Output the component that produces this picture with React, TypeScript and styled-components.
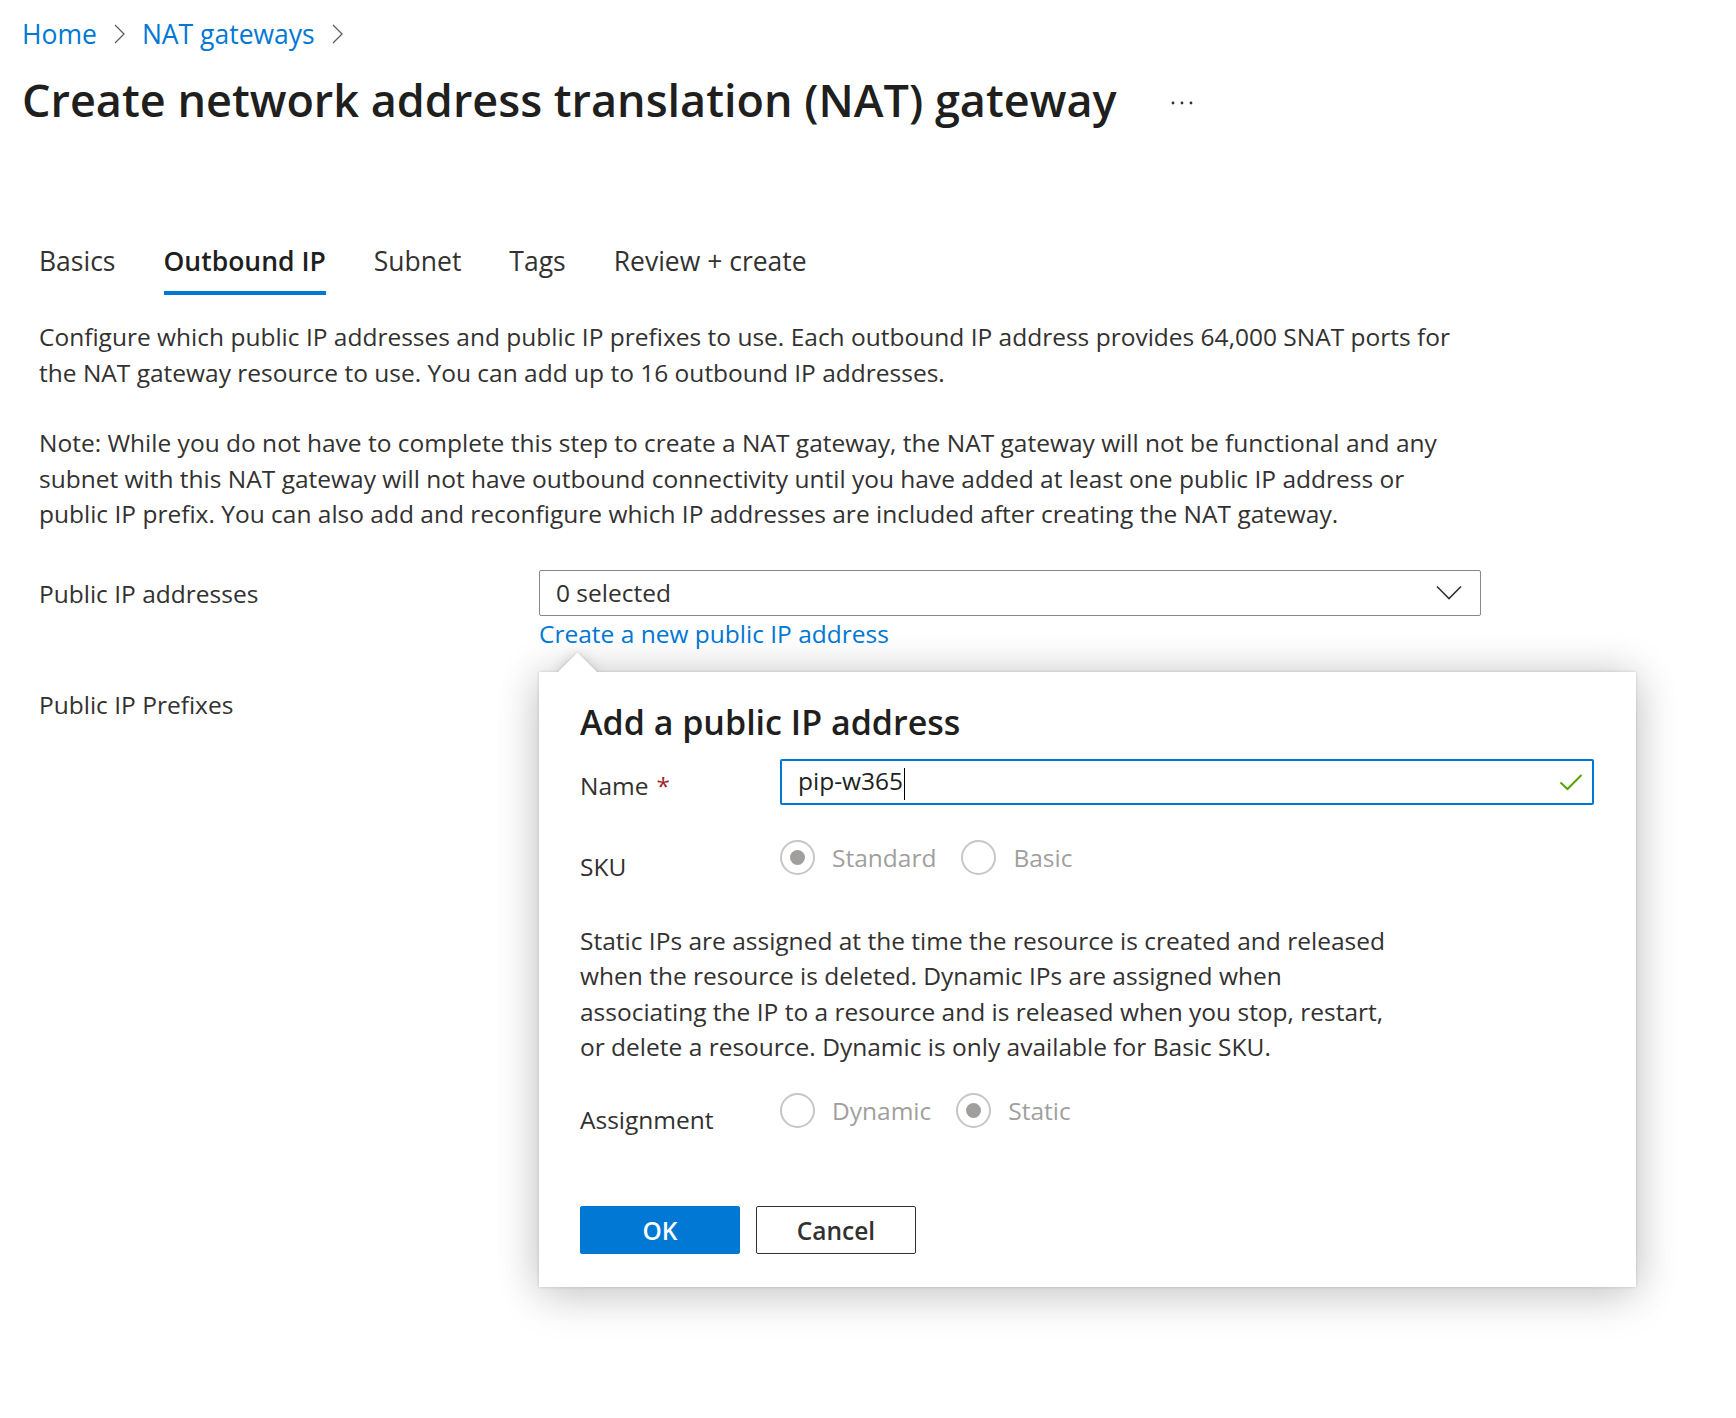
import styled, { createGlobalStyle } from 'styled-components'

const GlobalStyle = createGlobalStyle`
  html, body {
    margin: 0;
    padding: 0;
    background: #ffffff;
  }
  body {
    font-family: 'Open Sans', 'Noto Sans', sans-serif;
    color: #323130;
    -webkit-font-smoothing: antialiased;
  }
`

const Page = styled.div`
  width: 1736px;
  min-height: 1418px;
  box-sizing: border-box;
  padding-top: 16px;
`

const Header = styled.header`
  padding-left: 22px;
`

const Breadcrumb = styled.nav`
  display: flex;
  align-items: center;
  gap: 17px;
  font-size: 26.5px;
  line-height: 36px;
`

const Crumb = styled.a`
  color: #0078d4;
  text-decoration: none;
`

const TitleRow = styled.div`
  display: flex;
  align-items: center;
  gap: 54px;
  margin-top: 18px;
`

const Title = styled.h1`
  margin: 0;
  font-size: 45px;
  line-height: 60px;
  font-weight: 600;
  color: #201f1e;
`

const Dots = styled.svg`
  margin-top: 6px;
`

const Content = styled.main`
  padding-left: 39px;
`

const Tabs = styled.div`
  display: flex;
  gap: 48px;
  margin-top: 114px;
`

const Tab = styled.div<{ active?: boolean }>`
  font-size: 26.5px;
  line-height: 34px;
  padding-bottom: 13px;
  font-weight: ${({ active }) => (active ? 600 : 400)};
  color: ${({ active }) => (active ? '#201f1e' : '#323130')};
  border-bottom: 4px solid ${({ active }) => (active ? '#0078d4' : 'transparent')};
`

const Paragraph = styled.p<{ gap: number }>`
  margin: ${({ gap }) => gap}px 0 0;
  font-size: 24.5px;
  line-height: 35.5px;
  white-space: nowrap;
`

const Form = styled.div`
  display: grid;
  grid-template-columns: 500px 942px;
  row-gap: 35.5px;
  margin-top: 38px;
`

const Label = styled.div<{ offset?: number }>`
  font-size: 24.5px;
  line-height: 35.5px;
  padding-top: ${({ offset }) => offset ?? 0}px;
`

const Field = styled.div`
  position: relative;
`

const Select = styled.div`
  height: 46px;
  box-sizing: border-box;
  border: 1px solid #8a8886;
  border-radius: 2px;
  display: flex;
  align-items: center;
  justify-content: space-between;
  padding: 0 18px 0 16px;
  font-size: 24.5px;
`

const Link = styled.a`
  display: block;
  color: #0078d4;
  font-size: 24.5px;
  line-height: 35.5px;
  text-decoration: none;
`

const Callout = styled.div`
  position: absolute;
  left: 0;
  top: calc(100% + 20.5px);
  width: 1097px;
  z-index: 10;
  box-shadow: 0 0 40px rgba(0, 0, 0, 0.16), 0 12px 44px rgba(0, 0, 0, 0.12),
    0 0 3px rgba(0, 0, 0, 0.16);
`

const Beak = styled.div`
  position: absolute;
  left: 24.5px;
  top: -13.5px;
  width: 27px;
  height: 27px;
  background: #ffffff;
  transform: rotate(45deg);
  box-shadow: 0 0 14px rgba(0, 0, 0, 0.16), 0 0 3px rgba(0, 0, 0, 0.14);
`

const CalloutBody = styled.div`
  position: relative;
  z-index: 1;
  background: #ffffff;
  padding: 28px 42px 33px 41px;
`

const CalloutTitle = styled.h2`
  margin: 0;
  font-size: 34px;
  line-height: 44px;
  font-weight: 600;
  color: #201f1e;
`

const Row = styled.div<{ gap: number }>`
  display: grid;
  grid-template-columns: 200px 1fr;
  align-items: start;
  margin-top: ${({ gap }) => gap}px;
`

const Required = styled.span`
  color: #a4262c;
  margin-left: 8px;
`

const Input = styled.div`
  height: 46px;
  box-sizing: border-box;
  border: 2px solid #0078d4;
  border-radius: 2px;
  display: flex;
  align-items: center;
  justify-content: space-between;
  padding: 0 9px 0 16px;
  font-size: 24.5px;
  color: #201f1e;
`

const Caret = styled.span`
  display: inline-block;
  width: 1px;
  height: 32px;
  background: #000000;
  vertical-align: middle;
  margin-left: 1px;
`

const RadioGroup = styled.div`
  display: flex;
  align-items: center;
  height: 35px;
`

const RadioOption = styled.label`
  display: flex;
  align-items: center;
  gap: 17px;
  margin-right: 25px;
  font-size: 24.5px;
  line-height: 35px;
  color: #a19f9d;
`

const RadioCircle = styled.span<{ checked?: boolean }>`
  width: 35px;
  height: 35px;
  box-sizing: border-box;
  border: 2px solid #c8c6c4;
  border-radius: 50%;
  display: flex;
  align-items: center;
  justify-content: center;

  &::after {
    content: '';
    width: 15px;
    height: 15px;
    border-radius: 50%;
    background: ${({ checked }) => (checked ? '#a19f9d' : 'transparent')};
  }
`

const Buttons = styled.div`
  display: flex;
  gap: 16px;
  margin-top: 69px;
`

const Button = styled.button<{ primary?: boolean }>`
  width: 160px;
  height: 48px;
  box-sizing: border-box;
  border-radius: 2px;
  font-family: inherit;
  font-size: 24.5px;
  font-weight: 600;
  border: 1px solid ${({ primary }) => (primary ? '#0078d4' : '#323130')};
  background: ${({ primary }) => (primary ? '#0078d4' : '#ffffff')};
  color: ${({ primary }) => (primary ? '#ffffff' : '#323130')};
`

function Chevron() {
  return (
    <svg width="11" height="20" viewBox="0 0 11 20">
      <polyline points="1,1 10,10 1,19" fill="none" stroke="#605e5c" strokeWidth="1.3" />
    </svg>
  )
}

function MoreDots() {
  return (
    <Dots width="22" height="6" viewBox="0 0 22 6">
      <circle cx="2" cy="3" r="1.4" fill="#323130" />
      <circle cx="11" cy="3" r="1.4" fill="#323130" />
      <circle cx="20" cy="3" r="1.4" fill="#323130" />
    </Dots>
  )
}

function DropChevron() {
  return (
    <svg width="26" height="15" viewBox="0 0 26 15">
      <polyline points="1,1.5 13,13.5 25,1.5" fill="none" stroke="#323130" strokeWidth="1.6" />
    </svg>
  )
}

function Check() {
  return (
    <svg width="24" height="18" viewBox="0 0 24 18">
      <polyline points="1.5,9.5 8.5,16 22.5,2" fill="none" stroke="#57a300" strokeWidth="2" />
    </svg>
  )
}

function Radio({ label, checked }: { label: string; checked?: boolean }) {
  return (
    <RadioOption>
      <RadioCircle checked={checked} />
      {label}
    </RadioOption>
  )
}

export default function App() {
  return (
    <Page>
      <GlobalStyle />
      <Header>
        <Breadcrumb>
          <Crumb>Home</Crumb>
          <Chevron />
          <Crumb>NAT gateways</Crumb>
          <Chevron />
        </Breadcrumb>
        <TitleRow>
          <Title>Create network address translation (NAT) gateway</Title>
          <MoreDots />
        </TitleRow>
      </Header>

      <Content>
        <Tabs>
          <Tab>Basics</Tab>
          <Tab active>Outbound IP</Tab>
          <Tab>Subnet</Tab>
          <Tab>Tags</Tab>
          <Tab>Review + create</Tab>
        </Tabs>

        <Paragraph gap={24}>
          Configure which public IP addresses and public IP prefixes to use. Each outbound IP address provides 64,000 SNAT ports for
          <br />
          the NAT gateway resource to use. You can add up to 16 outbound IP addresses.
        </Paragraph>
        <Paragraph gap={35}>
          Note: While you do not have to complete this step to create a NAT gateway, the NAT gateway will not be functional and any
          <br />
          subnet with this NAT gateway will not have outbound connectivity until you have added at least one public IP address or
          <br />
          public IP prefix. You can also add and reconfigure which IP addresses are included after creating the NAT gateway.
        </Paragraph>

        <Form>
          <Label offset={6}>Public IP addresses</Label>
          <Field>
            <Select>
              <span>0 selected</span>
              <DropChevron />
            </Select>
            <Link>Create a new public IP address</Link>

            <Callout>
              <Beak />
              <CalloutBody>
                <CalloutTitle>Add a public IP address</CalloutTitle>

                <Row gap={15.5}>
                  <Label offset={8.5}>
                    Name<Required>*</Required>
                  </Label>
                  <Input>
                    <span>
                      pip-w365
                      <Caret />
                    </span>
                    <Check />
                  </Input>
                </Row>

                <Row gap={34.5}>
                  <Label offset={9}>SKU</Label>
                  <RadioGroup>
                    <Radio label="Standard" checked />
                    <Radio label="Basic" />
                  </RadioGroup>
                </Row>

                <Paragraph gap={38.5}>
                  Static IPs are assigned at the time the resource is created and released
                  <br />
                  when the resource is deleted. Dynamic IPs are assigned when
                  <br />
                  associating the IP to a resource and is released when you stop, restart,
                  <br />
                  or delete a resource. Dynamic is only available for Basic SKU.
                </Paragraph>

                <Row gap={28}>
                  <Label offset={9}>Assignment</Label>
                  <RadioGroup>
                    <Radio label="Dynamic" />
                    <Radio label="Static" checked />
                  </RadioGroup>
                </Row>

                <Buttons>
                  <Button primary>OK</Button>
                  <Button>Cancel</Button>
                </Buttons>
              </CalloutBody>
            </Callout>
          </Field>

          <Label>Public IP Prefixes</Label>
          <div />
        </Form>
      </Content>
    </Page>
  )
}
